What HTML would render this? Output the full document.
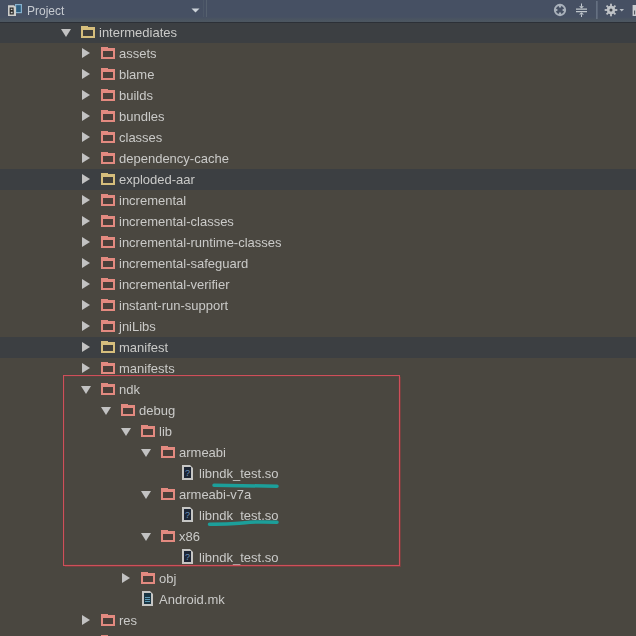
<!DOCTYPE html>
<html><head><meta charset="utf-8">
<style>
html,body{margin:0;padding:0;}
body{width:636px;height:636px;overflow:hidden;position:relative;background:#4a4740;font-family:"Liberation Sans",sans-serif;}
.hdr{position:absolute;z-index:1;left:0;top:0;width:636px;height:22px;background:linear-gradient(#465063 0,#465063 17px,#4a5461 19px,#4c5660 21px);}
.hdr .line{position:absolute;left:0;top:22px;width:636px;height:1px;background:#2c3037;}
.htitle{position:absolute;left:27px;top:1px;will-change:transform;line-height:21px;font-size:12px;color:#c6cad0;}
.row{position:absolute;left:0;width:636px;height:21px;background:#4a4740;}
.row.g{background:#3c3f42;}
.t{position:absolute;top:0;will-change:transform;line-height:21px;font-size:13px;color:#cacac8;white-space:nowrap;}
.ad{position:absolute;top:7px;width:0;height:0;border-left:5px solid transparent;border-right:5px solid transparent;border-top:8px solid #c2c2c2;}
.ar{position:absolute;top:5px;width:0;height:0;border-top:5px solid transparent;border-bottom:5px solid transparent;border-left:8px solid #c2c2c2;}
.fold{position:absolute;top:4px;width:14px;height:12px;}
.fold:before{content:"";position:absolute;left:0;top:0;width:7px;height:1px;}
.fold i{position:absolute;left:0;top:1px;width:10px;height:6px;border:2px solid;border-top-width:3px;}
.yf:before{background:#d6be7c;} .yf i{border-color:#d6be7c;background:#403e3a;}
.rf:before{background:#e38a80;} .rf i{border-color:#e38a80;background:#4a3f39;}
.file{position:absolute;top:2px;width:11px;height:15px;}
.file i{position:absolute;left:0;top:0;width:7px;height:11px;border:2px solid #cacaca;background:#1f2a38;font-style:normal;font-size:8px;color:#7fa6c8;text-align:center;line-height:11px;}
.file.mk i{background:#1c3946;}
.file.mk b{position:absolute;left:3px;width:5px;height:1px;background:#6fa6c0;}
.box{position:absolute;left:63px;top:375px;width:335px;height:189px;border:1px solid #cf4f5a;box-shadow:0 0 0.8px 0.5px rgba(170,55,62,0.45), inset 0 0 0.8px 0.5px rgba(170,55,62,0.35);}
svg{position:absolute;left:0;top:0;}
.row svg.fi{top:2px;}
</style></head><body>
<div class="hdr"><div class="line"></div>
<span class="htitle">Project</span>
</div>
<svg width="636" height="22" style="z-index:2">
  <!-- project icon -->
  <rect x="15.6" y="4.6" width="5.8" height="8" fill="#2e5e80" stroke="#86b0cc" stroke-width="1.2"/>
  <path d="M8 5.2 H14 L16 7.2 V16 H8 Z" fill="#cdcdcb"/>
  <path d="M10.2 8.2 H13 V10.6 H10.2 Z M10.2 11.2 H13.2 V13.8 H10.2 Z" fill="none" stroke="#2b2b2b" stroke-width="1.2"/>
  <!-- dropdown -->
  <path d="M191.5 8.5 L199.5 8.5 L195.5 12.5 Z" fill="#cdd3da"/>
  <rect x="203" y="0" width="1" height="17" fill="#4d5868"/>
  <rect x="206" y="0" width="1" height="17" fill="#56616f"/>
  <!-- locate -->
  <circle cx="560" cy="10" r="5.1" fill="none" stroke="#a9b1bb" stroke-width="2.1"/>
  <path d="M560 5 V7.4 M560 12.6 V15 M555 10 H557.4 M562.6 10 H565" stroke="#a9b1bb" stroke-width="2"/>
  <!-- collapse -->
  <path d="M576 9.2 H587 M576 11.7 H587" stroke="#c0c6cc" stroke-width="1.2"/>
  <path d="M579 6.2 H584 L581.5 8.6 Z M579 14.6 H584 L581.5 12.3 Z" fill="#c0c6cc"/>
  <path d="M581.5 3.5 V6.5 M581.5 14.5 V17" stroke="#c0c6cc" stroke-width="1"/>
  <!-- separator -->
  <rect x="596.4" y="1" width="1" height="18" fill="#7a8696"/>
  <!-- gear -->
  <g fill="#bfc3c7" transform="translate(611 10)">
    <circle r="4.2"/>
    <rect x="-0.9" y="-6.3" width="1.8" height="12.6"/>
    <rect x="-0.9" y="-6.3" width="1.8" height="12.6" transform="rotate(45)"/>
    <rect x="-0.9" y="-6.3" width="1.8" height="12.6" transform="rotate(90)"/>
    <rect x="-0.9" y="-6.3" width="1.8" height="12.6" transform="rotate(135)"/>
    <circle r="1.5" fill="#3e444c"/>
  </g>
  <path d="M619.5 9 H624 L621.75 11.5 Z" fill="#b8bec6"/>
  <rect x="632.6" y="5" width="3.4" height="11" fill="#c8ccd0"/><rect x="634.2" y="10.5" width="0.9" height="4" fill="#3a3f46"/>
</svg>
<div class="row g" style="top:22px"><div class="ad" style="left:61px"></div><div class="fold yf" style="left:81px"><i></i></div><span class="t" style="left:99px">intermediates</span></div>
<div class="row" style="top:43px"><div class="ar" style="left:82px"></div><div class="fold rf" style="left:101px"><i></i></div><span class="t" style="left:119px">assets</span></div>
<div class="row" style="top:64px"><div class="ar" style="left:82px"></div><div class="fold rf" style="left:101px"><i></i></div><span class="t" style="left:119px">blame</span></div>
<div class="row" style="top:85px"><div class="ar" style="left:82px"></div><div class="fold rf" style="left:101px"><i></i></div><span class="t" style="left:119px">builds</span></div>
<div class="row" style="top:106px"><div class="ar" style="left:82px"></div><div class="fold rf" style="left:101px"><i></i></div><span class="t" style="left:119px">bundles</span></div>
<div class="row" style="top:127px"><div class="ar" style="left:82px"></div><div class="fold rf" style="left:101px"><i></i></div><span class="t" style="left:119px">classes</span></div>
<div class="row" style="top:148px"><div class="ar" style="left:82px"></div><div class="fold rf" style="left:101px"><i></i></div><span class="t" style="left:119px">dependency-cache</span></div>
<div class="row g" style="top:169px"><div class="ar" style="left:82px"></div><div class="fold yf" style="left:101px"><i></i></div><span class="t" style="left:119px">exploded-aar</span></div>
<div class="row" style="top:190px"><div class="ar" style="left:82px"></div><div class="fold rf" style="left:101px"><i></i></div><span class="t" style="left:119px">incremental</span></div>
<div class="row" style="top:211px"><div class="ar" style="left:82px"></div><div class="fold rf" style="left:101px"><i></i></div><span class="t" style="left:119px">incremental-classes</span></div>
<div class="row" style="top:232px"><div class="ar" style="left:82px"></div><div class="fold rf" style="left:101px"><i></i></div><span class="t" style="left:119px">incremental-runtime-classes</span></div>
<div class="row" style="top:253px"><div class="ar" style="left:82px"></div><div class="fold rf" style="left:101px"><i></i></div><span class="t" style="left:119px">incremental-safeguard</span></div>
<div class="row" style="top:274px"><div class="ar" style="left:82px"></div><div class="fold rf" style="left:101px"><i></i></div><span class="t" style="left:119px">incremental-verifier</span></div>
<div class="row" style="top:295px"><div class="ar" style="left:82px"></div><div class="fold rf" style="left:101px"><i></i></div><span class="t" style="left:119px">instant-run-support</span></div>
<div class="row" style="top:316px"><div class="ar" style="left:82px"></div><div class="fold rf" style="left:101px"><i></i></div><span class="t" style="left:119px">jniLibs</span></div>
<div class="row g" style="top:337px"><div class="ar" style="left:82px"></div><div class="fold yf" style="left:101px"><i></i></div><span class="t" style="left:119px">manifest</span></div>
<div class="row" style="top:358px"><div class="ar" style="left:82px"></div><div class="fold rf" style="left:101px"><i></i></div><span class="t" style="left:119px">manifests</span></div>
<div class="row" style="top:379px"><div class="ad" style="left:81px"></div><div class="fold rf" style="left:101px"><i></i></div><span class="t" style="left:119px">ndk</span></div>
<div class="row" style="top:400px"><div class="ad" style="left:101px"></div><div class="fold rf" style="left:121px"><i></i></div><span class="t" style="left:139px">debug</span></div>
<div class="row" style="top:421px"><div class="ad" style="left:121px"></div><div class="fold rf" style="left:141px"><i></i></div><span class="t" style="left:159px">lib</span></div>
<div class="row" style="top:442px"><div class="ad" style="left:141px"></div><div class="fold rf" style="left:161px"><i></i></div><span class="t" style="left:179px">armeabi</span></div>
<div class="row" style="top:463px"><svg class="fi" style="left:182px" width="12" height="16" viewBox="0 0 12 16"><path d="M0 0 H8 L11 3 V15 H0 Z" fill="#c6c6c4"/><rect x="2" y="2" width="7" height="11" fill="#1c2534"/><text x="5.5" y="10.5" text-anchor="middle" font-family="Liberation Sans" font-size="9" fill="#6c93b8">?</text></svg><span class="t" style="left:199px">libndk_test.so</span></div>
<div class="row" style="top:484px"><div class="ad" style="left:141px"></div><div class="fold rf" style="left:161px"><i></i></div><span class="t" style="left:179px">armeabi-v7a</span></div>
<div class="row" style="top:505px"><svg class="fi" style="left:182px" width="12" height="16" viewBox="0 0 12 16"><path d="M0 0 H8 L11 3 V15 H0 Z" fill="#c6c6c4"/><rect x="2" y="2" width="7" height="11" fill="#1c2534"/><text x="5.5" y="10.5" text-anchor="middle" font-family="Liberation Sans" font-size="9" fill="#6c93b8">?</text></svg><span class="t" style="left:199px">libndk_test.so</span></div>
<div class="row" style="top:526px"><div class="ad" style="left:141px"></div><div class="fold rf" style="left:161px"><i></i></div><span class="t" style="left:179px">x86</span></div>
<div class="row" style="top:547px"><svg class="fi" style="left:182px" width="12" height="16" viewBox="0 0 12 16"><path d="M0 0 H8 L11 3 V15 H0 Z" fill="#c6c6c4"/><rect x="2" y="2" width="7" height="11" fill="#1c2534"/><text x="5.5" y="10.5" text-anchor="middle" font-family="Liberation Sans" font-size="9" fill="#6c93b8">?</text></svg><span class="t" style="left:199px">libndk_test.so</span></div>
<div class="row" style="top:568px"><div class="ar" style="left:122px"></div><div class="fold rf" style="left:141px"><i></i></div><span class="t" style="left:159px">obj</span></div>
<div class="row" style="top:589px"><svg class="fi" style="left:142px" width="12" height="16" viewBox="0 0 12 16"><path d="M0 0 H8 L11 3 V15 H0 Z" fill="#c6c6c4"/><rect x="2" y="2" width="7" height="11" fill="#1a3644"/><path d="M3 6.5 H8 M3 8.5 H8 M3 10.5 H8" stroke="#5f9cb8" stroke-width="1"/></svg><span class="t" style="left:159px">Android.mk</span></div>
<div class="row" style="top:610px"><div class="ar" style="left:82px"></div><div class="fold rf" style="left:101px"><i></i></div><span class="t" style="left:119px">res</span></div>
<div class="row" style="top:631px"><div class="fold rf" style="left:101px"><i></i></div></div>
<div class="box"></div>
<svg width="636" height="636" style="z-index:3">
  <path d="M214 485.3 Q245 485.8 277 486.2" stroke="#1c9f9a" stroke-width="3.5" fill="none" stroke-linecap="round"/>
  <path d="M209.5 524.2 Q235 524.2 245 522.8 T277 522.2" stroke="#1c9f9a" stroke-width="3.5" fill="none" stroke-linecap="round"/>
</svg>
</body></html>
